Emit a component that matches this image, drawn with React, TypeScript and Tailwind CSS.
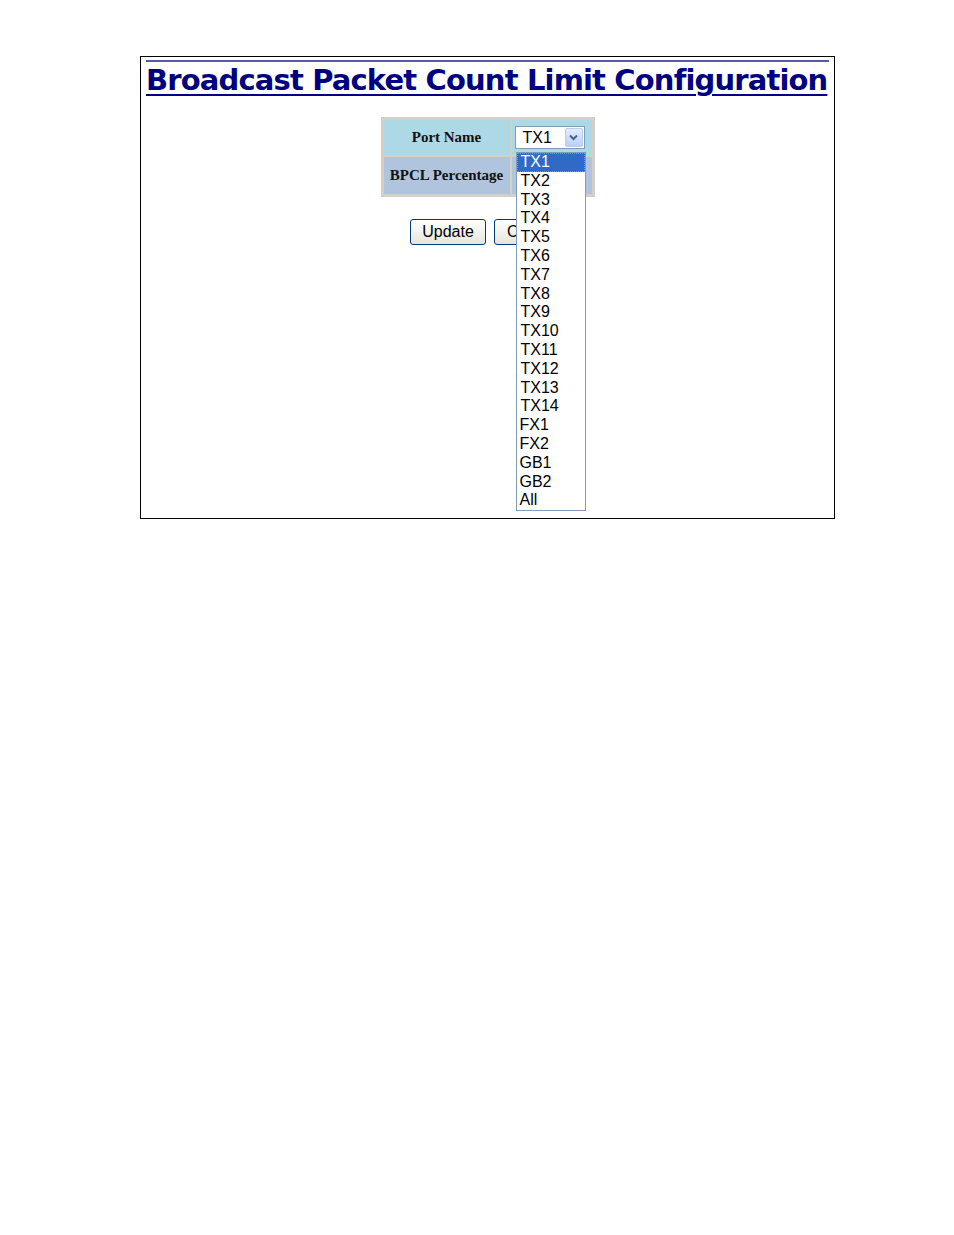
const ports = [
  "TX1", "TX2", "TX3", "TX4", "TX5", "TX6", "TX7", "TX8", "TX9", "TX10",
  "TX11", "TX12", "TX13", "TX14", "FX1", "FX2", "GB1", "GB2", "All",
];

function XpButton({ children, className = "" }: { children: React.ReactNode; className?: string }) {
  return (
    <button
      className={`h-[26px] rounded-[3px] border border-[#003c74] bg-gradient-to-b from-white to-[#e6e5dc] font-['Liberation_Sans',Arial,sans-serif] text-[16px] leading-none text-black ${className}`}
    >
      {children}
    </button>
  );
}

export default function App() {
  return (
    <div className="min-h-[1235px] w-full bg-white">
      <div className="ml-[140px] mt-[56px] h-[463px] w-[695px] border border-black">
        <div className="px-[5px] pt-[3px]">
          <div className="w-[683px] border-t-2 border-[#5858a8]" />
          <h1 className="mt-[1px] whitespace-nowrap font-['DejaVu_Sans',Verdana,sans-serif] text-[29px] font-bold leading-[34px] tracking-[-0.85px] text-[#000080] underline decoration-[#000080] decoration-2 underline-offset-[4px]">
            Broadcast Packet Count Limit Configuration
          </h1>
        </div>

        <div className="mt-[20px] flex flex-col items-center">
          <div className="relative">
            <table className="border-[3px] border-[#d4d0c8] border-separate border-spacing-0 font-['Liberation_Serif','Times_New_Roman',serif] text-[15px] font-bold text-[#111]">
              <tbody>
                <tr className="bg-[#add8e6]">
                  <td className="h-[37px] w-[128px] border-b-2 border-r-2 border-[#cfd3c3] text-center">Port Name</td>
                  <td className="w-[80px] border-b-2 border-[#cfd3c3] pl-[3px]">
                    <div className="flex h-[23px] w-[70px] items-center justify-between border border-[#7f9db9] bg-white pl-[7px] pr-[1px] font-['Liberation_Sans',Arial,sans-serif] text-[16px] font-normal text-black">
                      <span>TX1</span>
                      <span className="flex h-[19px] w-[18px] items-center justify-center rounded-[2px] border border-[#b8cdf5] bg-gradient-to-b from-[#e3ecfd] to-[#b9d0f7]">
                        <svg width="9" height="7" viewBox="0 0 9 7">
                          <path d="M1 1.5 L4.5 5 L8 1.5" fill="none" stroke="#4d6185" strokeWidth="2" />
                        </svg>
                      </span>
                    </div>
                  </td>
                </tr>
                <tr className="bg-[#b0c4de]">
                  <td className="h-[37px] border-r-2 border-[#cfd3c3] px-[5px] text-center">BPCL Percentage</td>
                  <td />
                </tr>
              </tbody>
            </table>

            <div className="absolute left-[135px] top-[35px] w-[70px] border border-[#7f9db9] bg-white font-['Liberation_Sans',Arial,sans-serif] text-[16px] leading-[18.8px] text-black">
              {ports.map((p, i) => (
                <div
                  key={p}
                  className={
                    i === 0
                      ? "border border-dotted border-[#c08a30] bg-[#316ac5] pl-[3px] leading-[16.8px] text-white"
                      : p.startsWith("T")
                        ? "pl-[4px]"
                        : "pl-[3px]"
                  }
                >
                  {p}
                </div>
              ))}
            </div>
          </div>

          <div className="mt-[22px] flex gap-[8px] pl-[5px]">
            <XpButton className="w-[76px]">Update</XpButton>
            <XpButton className="w-[76px]">Cancel</XpButton>
          </div>
        </div>
      </div>
    </div>
  );
}
